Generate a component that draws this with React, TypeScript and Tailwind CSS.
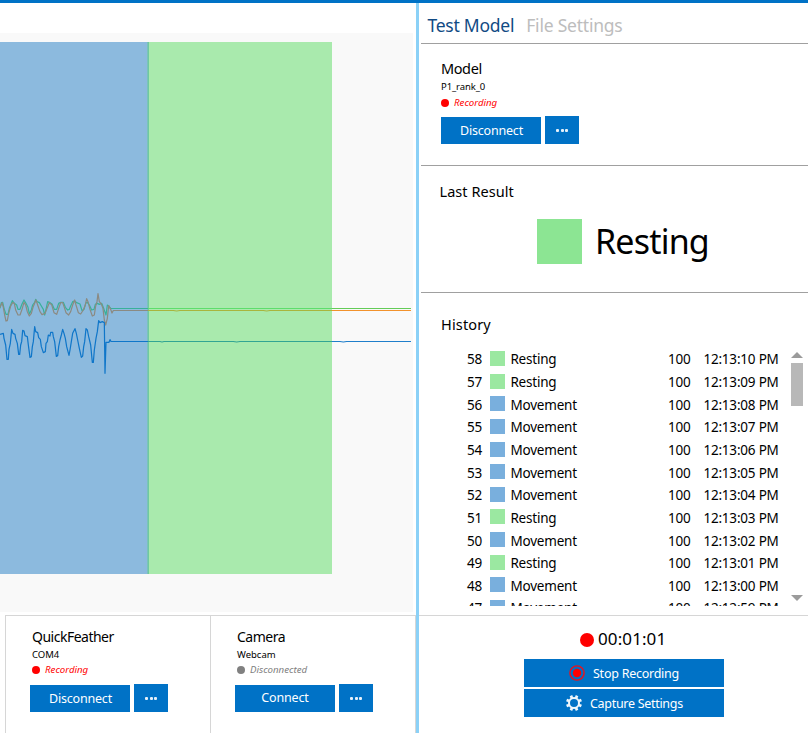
import React from "react";

const BLUE_TRACE =
  "0,193 10,190 12,205 17,225 21,268 25,268 27,238 31,220 35,178 39,190 45,193 47,205 52,220 56,253 59,253 62,225 65,215 68,181 72,183 75,197 82,200 85,225 90,262 94,260 97,230 100,215 104,170 107,185 113,188 116,203 121,208 124,230 130,248 136,245 138,220 142,215 145,195 150,198 152,187 158,187 160,200 164,215 169,259 173,257 176,230 180,210 184,195 188,178 192,190 196,205 200,230 207,256 210,240 214,215 218,190 225,176 229,190 233,210 238,235 244,262 248,258 251,230 254,215 258,176 262,180 266,200 272,225 277,277 280,277 283,240 288,205 292,185 296,152 300,158 307,155 313,158 315,310 318,217 327,217 330,209 333,214.5 480,214.5 486,216 492,214.5 700,214.5 710,216 720,214.5 1020,214.5 1030,216 1040,214.5 1233,214.5";
const GREEN_TRACE =
  "0,115 4,98 8,97 12,115 18,133 24,133 28,115 32,105 37,92 43,100 50,105 54,118 60,118 66,102 72,90 78,100 84,112 88,132 94,120 98,105 104,97 107,88 111,95 118,98 124,108 130,118 134,135 138,118 143,95 150,98 156,102 163,118 170,118 176,100 182,97 190,97 196,112 203,120 208,118 212,108 218,95 224,93 230,98 240,102 246,122 252,118 257,100 262,97 268,105 275,120 282,118 286,103 292,100 298,103 305,100 312,118 318,135 322,105 326,108 332,115.5 1233,115.5";
const ORANGE_TRACE =
  "0,112 6,98 10,112 14,135 18,153 22,152 26,130 32,108 38,98 43,100 47,120 54,135 60,135 66,118 72,97 77,105 82,125 88,138 94,130 99,112 108,90 113,105 120,125 126,134 135,130 140,118 148,98 155,104 162,128 170,133 176,115 182,98 188,98 193,112 198,128 206,135 212,125 218,105 224,90 228,105 235,128 242,132 250,120 256,105 260,86 264,95 270,118 277,138 283,135 287,108 291,95 294,71 298,95 304,102 309,115 313,150 317,165 322,145 326,107 332,118 336,129 340,121.5 520,121.5 530,123 540,121.5 790,121.5 800,123 810,121.5 1233,121.5";

function TraceGradient({ id, colors }: { id: string; colors: [string, string, string] }) {
  return (
    <linearGradient id={id} gradientUnits="userSpaceOnUse" x1="0" y1="0" x2="1239" y2="0">
      <stop offset="0.3577" stopColor={colors[0]} />
      <stop offset="0.3577" stopColor={colors[1]} />
      <stop offset="0.8039" stopColor={colors[1]} />
      <stop offset="0.8039" stopColor={colors[2]} />
    </linearGradient>
  );
}

function SignalChart() {
  return (
    <svg width="413" height="579" viewBox="0 0 413 579" className="block bg-[#f9f9f9]">
      <defs>
        <TraceGradient id="traceGreen" colors={["#38b09a", "#5ddd6c", "#64cc58"]} />
        <TraceGradient id="traceOrange" colors={["#8b8a82", "#a9b53d", "#f2922c"]} />
        <TraceGradient id="traceBlue" colors={["#0f76c9", "#32a593", "#207fcb"]} />
      </defs>
      <g shapeRendering="crispEdges">
        <rect x="0" y="9" width="148" height="532" fill="#8cbade" />
        <rect x="148" y="9" width="184" height="532" fill="#a9eaad" />
      </g>
      <rect x="147.4" y="9" width="1.6" height="532" fill="#6fc8a2" />
      <g transform="translate(0 237) scale(0.33333)" fill="none" strokeWidth="3.7" strokeLinejoin="round">
        <polyline points={GREEN_TRACE} stroke="url(#traceGreen)" />
        <polyline points={ORANGE_TRACE} stroke="url(#traceOrange)" />
        <polyline points={BLUE_TRACE} stroke="url(#traceBlue)" />
      </g>
    </svg>
  );
}

function MoreButton() {
  return (
    <button className="flex h-7 w-[34px] items-center justify-center gap-[1.6px] bg-[#0072c6] pt-px">
      <span className="size-[3px] rounded-[1px] bg-[#e6f1fa]" />
      <span className="size-[3px] rounded-[1px] bg-[#e6f1fa]" />
      <span className="size-[3px] rounded-[1px] bg-[#e6f1fa]" />
    </button>
  );
}

function DeviceActions({ label }: { label: string }) {
  return (
    <div className="flex items-end gap-1">
      <button
        className={
          label === "Disconnect"
            ? "h-[27px] w-[100px] bg-[#0072c6] pt-[2px] pl-px text-[12.5px] tracking-[-0.2px] text-white"
            : "h-[27px] w-[100px] bg-[#0072c6] text-[12.5px] tracking-[-0.15px] text-white"
        }
      >
        {label}
      </button>
      <MoreButton />
    </div>
  );
}

function DeviceCard({ name, port, connected }: { name: string; port: string; connected: boolean }) {
  return (
    <section className="h-[118px] w-[205px] border-t border-l border-[#d6d6d6] pt-[11px]">
      <h2 className="ml-[26px] text-[14px] leading-5 tracking-[-0.5px]">{name}</h2>
      <p className="ml-[26px] mt-px text-[9.5px] leading-[14px]">{port}</p>
      <div className={connected ? "ml-[26px] flex h-4 items-center text-[#ff0000]" : "ml-[26px] flex h-4 items-center text-[#808080]"}>
        <span className="size-2 rounded-full bg-current" />
        <em className="ml-[5px] text-[9.7px] leading-4">{connected ? "Recording" : "Disconnected"}</em>
      </div>
      <div className="ml-6 mt-[6px]">
        <DeviceActions label={connected ? "Disconnect" : "Connect"} />
      </div>
    </section>
  );
}

const HISTORY = [
  { id: 58, label: "Resting", time: "12:13:10 PM" },
  { id: 57, label: "Resting", time: "12:13:09 PM" },
  { id: 56, label: "Movement", time: "12:13:08 PM" },
  { id: 55, label: "Movement", time: "12:13:07 PM" },
  { id: 54, label: "Movement", time: "12:13:06 PM" },
  { id: 53, label: "Movement", time: "12:13:05 PM" },
  { id: 52, label: "Movement", time: "12:13:04 PM" },
  { id: 51, label: "Resting", time: "12:13:03 PM" },
  { id: 50, label: "Movement", time: "12:13:02 PM" },
  { id: 49, label: "Resting", time: "12:13:01 PM" },
  { id: 48, label: "Movement", time: "12:13:00 PM" },
  { id: 47, label: "Movement", time: "12:12:59 PM" },
];

function HistoryList() {
  return (
    <div className="flex h-[259px]">
      <ul className="h-[259px] w-[370px] overflow-hidden text-[13.5px] leading-[22px] tracking-[-0.2px]">
        {HISTORY.map((row) => (
          <li key={row.id} className="flex h-[22.65px]">
            <span className="ml-[46px] w-[23px] pt-[1.4px]">{row.id}</span>
            <span className={row.label === "Resting" ? "mt-1 size-[15px] bg-[#9be8a1]" : "mt-1 size-[15px] bg-[#79afdd]"} />
            <span className="ml-[5.4px] w-[157.6px] pt-[1.4px]">{row.label}</span>
            <span className="w-[35.4px] pt-[1.4px]">100</span>
            <span className="whitespace-nowrap pt-[1.4px]">{row.time}</span>
          </li>
        ))}
      </ul>
      <div className="flex w-3 flex-col pt-[5px]">
        <svg width="12" height="6" viewBox="0 0 12 6">
          <path d="M6 0 12 6H0Z" fill="#9b9b9b" />
        </svg>
        <div className="mt-[5px] h-[43px] bg-[#b8b8b8]" />
        <svg width="12" height="6" viewBox="0 0 12 6" className="mt-auto mb-[5px]">
          <path d="M0 0H12L6 6Z" fill="#9b9b9b" />
        </svg>
      </div>
    </div>
  );
}

function RecordIcon() {
  return (
    <svg width="16" height="16" viewBox="0 0 16 16">
      <circle cx="8" cy="8" r="7.1" fill="none" stroke="#ee1019" strokeWidth="1.4" />
      <circle cx="8" cy="8" r="4.2" fill="#ff0000" />
    </svg>
  );
}

function GearIcon() {
  return (
    <svg width="16" height="16" viewBox="0 0 16 16" fill="none" stroke="#eef6fc">
      <circle cx="8" cy="8" r="5" strokeWidth="2" />
      <g strokeWidth="2.7">
        {[22.5, 67.5, 112.5, 157.5, 202.5, 247.5, 292.5, 337.5].map((angle) => (
          <path key={angle} d="M8 0V2.8" transform={`rotate(${angle} 8 8)`} />
        ))}
      </g>
    </svg>
  );
}

export default function App() {
  return (
    <div className="h-[733px] w-[808px] overflow-hidden border-t-[3px] border-[#0072c6] bg-white font-['Noto_Sans','Open_Sans',sans-serif] text-black">
      <div className="flex h-[730px]">
        <main className="w-[416px] pt-[30px]">
          <SignalChart />
          <div className="mt-[3px] ml-[5px] flex">
            <DeviceCard name="QuickFeather" port="COM4" connected />
            <DeviceCard name="Camera" port="Webcam" connected={false} />
            <div className="h-[118px] w-px bg-[#d6d6d6]" />
          </div>
        </main>
        <div className="w-[3px] bg-[#8bd1f7]" />
        <aside className="w-[389px]">
          <nav className="ml-[2px] flex h-[41px] gap-3 border-b border-[#a0a0a0] pl-[6.5px] pt-[9px] text-[17.5px] leading-[26px]">
            <span className="tracking-[-0.25px] text-[#114b84]">Test Model</span>
            <span className="tracking-[-0.22px] text-[#bdbdbd]">File Settings</span>
          </nav>
          <section className="ml-[2px] h-[122px] border-b border-[#a0a0a0] pl-5 pt-[14px]">
            <h2 className="text-[14.5px] leading-[21px] tracking-[-0.4px]">Model</h2>
            <p className="mt-px text-[9.5px] leading-[14px] tracking-[-0.1px]">P1_rank_0</p>
            <div className="mt-px flex h-4 items-center text-[#ff0000]">
              <span className="size-2 rounded-full bg-current" />
              <em className="ml-[5px] text-[9.7px] leading-4">Recording</em>
            </div>
            <div className="mt-[5px]">
              <DeviceActions label="Disconnect" />
            </div>
          </section>
          <section className="ml-[2px] h-[127px] border-b border-[#a0a0a0] pt-[15px]">
            <h2 className="ml-[18.5px] text-[14.5px] leading-[21px] tracking-[0.05px]">Last Result</h2>
            <div className="ml-[116px] mt-[17px] flex h-[45px] items-center">
              <span className="size-[45px] bg-[#8ce593]" />
              <span className="ml-[13px] text-[34px] leading-[45px] tracking-[-0.8px]">Resting</span>
            </div>
          </section>
          <section className="ml-[2px] h-[322px] pt-[21px]">
            <h2 className="mb-[12px] ml-5 text-[14.5px] leading-[21px] tracking-[0.15px]">History</h2>
            <HistoryList />
          </section>
          <footer className="h-[118px] border-t border-[#d6d6d6] pt-[11px]">
            <div className="ml-[161px] flex h-6 items-center text-[17px] tracking-[0.1px]">
              <span className="mt-px size-[14px] rounded-full bg-[#ff0000]" />
              <span className="ml-1">00:01:01</span>
            </div>
            <div className="ml-[105px] mt-2 flex w-[200px] flex-col gap-[2px] text-[12.5px] text-white">
              <button className="flex h-7 items-center bg-[#0072c6] pl-[45px]">
                <RecordIcon />
                <span className="ml-2 pt-[2px] tracking-[-0.25px]">Stop Recording</span>
              </button>
              <button className="flex h-7 items-center bg-[#0072c6] pl-[41.5px]">
                <GearIcon />
                <span className="ml-[8.5px] pt-[2px] tracking-[-0.3px]">Capture Settings</span>
              </button>
            </div>
          </footer>
        </aside>
      </div>
    </div>
  );
}
